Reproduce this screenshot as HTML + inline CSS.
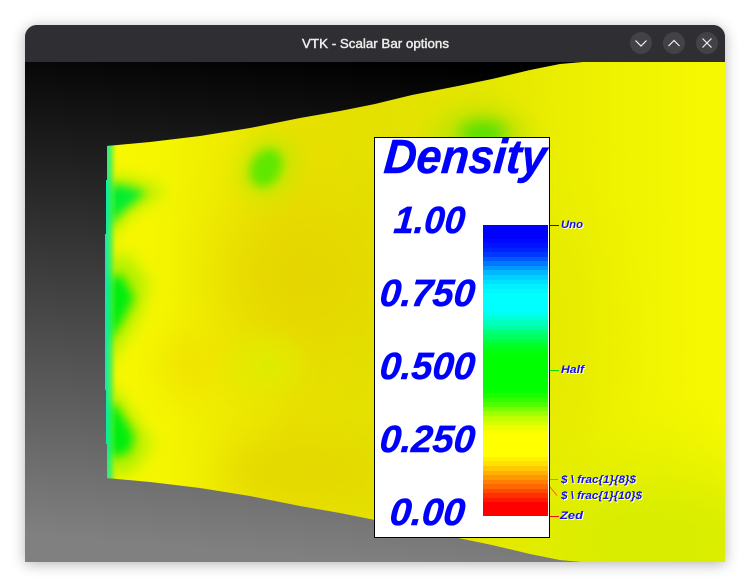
<!DOCTYPE html>
<html><head><meta charset="utf-8"><style>
html,body{margin:0;padding:0;background:#fff;width:750px;height:587px;overflow:hidden}
#win{position:absolute;left:25px;top:25px;width:700px;height:537px;border-radius:12px 12px 0 0;box-shadow:0 2px 14px rgba(0,0,0,.3)}
svg{position:absolute;left:0;top:0}
#bar{position:absolute;left:483px;top:225px;width:65px;height:291px;display:grid;grid-template-rows:repeat(64,1fr)}
#bar i{display:block}
</style></head><body>
<div id="win"></div>
<svg width="750" height="587" viewBox="0 0 750 587" font-family="'Liberation Sans',sans-serif">
<defs>
<clipPath id="w"><path d="M25 562V37a12 12 0 0 1 12-12H713a12 12 0 0 1 12 12V562Z"/></clipPath>
<linearGradient id="bg" gradientUnits="userSpaceOnUse" x1="395" y1="62" x2="355" y2="562"><stop offset="0" stop-color="#000"/><stop offset="1" stop-color="#808080"/></linearGradient>
<linearGradient id="base" gradientUnits="userSpaceOnUse" x1="107" y1="0" x2="725" y2="0">
<stop offset="0" stop-color="#f8f800"/><stop offset=".1" stop-color="#f4f500"/><stop offset=".2" stop-color="#eeea00"/><stop offset=".3" stop-color="#e8e000"/><stop offset=".42" stop-color="#e4e000"/><stop offset=".6" stop-color="#e4e600"/><stop offset=".8" stop-color="#eef200"/><stop offset="1" stop-color="#f6f900"/></linearGradient>
<linearGradient id="strip" gradientUnits="userSpaceOnUse" x1="105" y1="0" x2="117" y2="0"><stop offset="0" stop-color="#00e8c0"/><stop offset=".5" stop-color="#20f070" stop-opacity=".7"/><stop offset="1" stop-color="#80f020" stop-opacity="0"/></linearGradient>
<clipPath id="s"><path d="M107 146L150 142L200 136L250 128L300 118L340 111L375 104L412 95L458 86L492 79L530 70L560 64L583 62H725V562H583L560 560L530 554L492 545L458 538L412 529L375 520L340 513L300 506L250 496L200 488L150 482L107 478V444H106V390H105V234H106V180H107Z"/></clipPath>
<filter id="b4" x="-100%" y="-100%" width="300%" height="300%"><feGaussianBlur stdDeviation="5"/></filter>
<filter id="b6" x="-100%" y="-100%" width="300%" height="300%"><feGaussianBlur stdDeviation="8"/></filter>
<filter id="b10" x="-100%" y="-100%" width="300%" height="300%"><feGaussianBlur stdDeviation="12"/></filter>
<filter id="b20" x="-100%" y="-100%" width="300%" height="300%"><feGaussianBlur stdDeviation="20"/></filter>
<filter id="b40" x="-100%" y="-100%" width="300%" height="300%"><feGaussianBlur stdDeviation="40"/></filter>
<clipPath id="p"><rect x="375" y="138" width="174" height="399"/></clipPath>
</defs>
<g clip-path="url(#w)">
<rect x="25" y="25" width="700" height="537" fill="#2f2f33"/>
<rect x="25" y="62" width="700" height="500" fill="url(#bg)"/>
<g clip-path="url(#s)">
<rect x="100" y="50" width="640" height="520" fill="url(#base)"/>
<ellipse cx="300" cy="275" rx="80" ry="70" fill="#e4d400" filter="url(#b40)"/>
<ellipse cx="300" cy="470" rx="80" ry="30" fill="#e4d800" filter="url(#b20)"/>
<ellipse cx="190" cy="365" rx="28" ry="32" fill="#f0e000" filter="url(#b20)"/>
<ellipse cx="660" cy="540" rx="130" ry="70" fill="#d6ec00" filter="url(#b40)"/>
<ellipse cx="540" cy="340" rx="50" ry="120" fill="#e4ea00" filter="url(#b40)"/>
<ellipse cx="265" cy="366" rx="36" ry="28" fill="#e3ea00" filter="url(#b10)"/>
<ellipse cx="268" cy="365" rx="8" ry="7" fill="#d8ec00" filter="url(#b4)"/>
<ellipse cx="268" cy="167" rx="26" ry="32" transform="rotate(28 268 167)" fill="#c4e800" filter="url(#b10)"/>
<ellipse cx="266" cy="168" rx="15" ry="20" transform="rotate(28 266 168)" fill="#5ee800" filter="url(#b4)"/>
<ellipse cx="480" cy="135" rx="50" ry="28" fill="#c4e400" filter="url(#b10)"/>
<ellipse cx="483" cy="133" rx="24" ry="12" fill="#50e000" filter="url(#b6)"/>
<path d="M107 176L125 176L168 190L130 214L107 244Z" fill="#b0f000" filter="url(#b6)"/>
<path d="M107 184L124 186L146 192L122 212L107 228Z" fill="#00ee30" filter="url(#b4)"/>
<path d="M105 260L125 252L148 280L142 310L124 342L105 372Z" fill="#b0f000" filter="url(#b6)"/>
<path d="M105 278L122 275L134 298L120 325L105 345Z" fill="#00ee10" filter="url(#b4)"/>
<path d="M105 385L115 388L137 420L152 445L132 472L105 478Z" fill="#b0f000" filter="url(#b6)"/>
<path d="M105 405L116 405L134 435L130 452L112 458L105 450Z" fill="#00ee10" filter="url(#b4)"/>
<rect x="105" y="140" width="12" height="345" fill="url(#strip)"/>
</g>
<rect x="25" y="25" width="700" height="37" fill="#2f2f33"/>
<text x="375.5" y="48" text-anchor="middle" font-size="13" fill="#ececec" stroke="#ececec" stroke-width=".45" textLength="147" lengthAdjust="spacingAndGlyphs">VTK - Scalar Bar options</text>
<circle cx="641" cy="43" r="11" fill="#434347"/><circle cx="674" cy="43" r="11" fill="#434347"/><circle cx="707" cy="43" r="11" fill="#434347"/>
<g fill="none" stroke="#f0f0f0" stroke-width="1.2"><path d="M635.500 40.500L641 46L646.500 40.500"/><path d="M668.500 46L674 40.500L679.500 46"/><path d="M702.500 38.500L711.500 47.500M711.500 38.500L702.500 47.500"/></g>
</g>
<rect x="374.500" y="137.500" width="175" height="400" fill="#fff" stroke="#000"/>
<g clip-path="url(#p)" fill="#0000ff" stroke="#0000ff" stroke-width=".5" font-weight="700" font-style="italic">
<text transform="translate(383,173) skewX(-5)" font-size="48" textLength="162" lengthAdjust="spacingAndGlyphs">Density</text>
</g>
<g fill="#0000ff" stroke="#0000ff" stroke-width=".5" font-weight="700" font-style="italic" font-size="38">
<text transform="translate(393,233) skewX(-5)" textLength="71" lengthAdjust="spacingAndGlyphs">1.00</text>
<text transform="translate(379,306) skewX(-5)" textLength="95" lengthAdjust="spacingAndGlyphs">0.750</text>
<text transform="translate(379,379) skewX(-5)" textLength="95" lengthAdjust="spacingAndGlyphs">0.500</text>
<text transform="translate(379,452) skewX(-5)" textLength="95" lengthAdjust="spacingAndGlyphs">0.250</text>
<text transform="translate(389,525) skewX(-5)" textLength="75" lengthAdjust="spacingAndGlyphs">0.00</text>
</g>
<g stroke-width="1" shape-rendering="crispEdges">
<path d="M550 225.500H559" stroke="#1010c0"/>
<path d="M550 370.500H559" stroke="#00e000"/>
<path d="M550 479.500H558" stroke="#f08020"/>
<path d="M550 516.500H559" stroke="#f01010"/>
</g>
<path d="M550 487L557 495.500" stroke="#f05010" stroke-width=".8" fill="none"/>
<g font-weight="700" font-style="italic" font-size="11">
<g fill="#fff" transform="translate(1,1)">
<text x="561" y="228" textLength="22" lengthAdjust="spacingAndGlyphs">Uno</text>
<text x="561" y="373" textLength="23" lengthAdjust="spacingAndGlyphs">Half</text>
<text x="561" y="483" textLength="75" lengthAdjust="spacingAndGlyphs">$ \ frac{1}{8}$</text>
<text x="561" y="499" textLength="81" lengthAdjust="spacingAndGlyphs">$ \ frac{1}{10}$</text>
<text x="560" y="519" textLength="23" lengthAdjust="spacingAndGlyphs">Zed</text>
</g>
<g fill="#1010e8">
<text x="561" y="228" textLength="22" lengthAdjust="spacingAndGlyphs">Uno</text>
<text x="561" y="373" textLength="23" lengthAdjust="spacingAndGlyphs">Half</text>
<text x="561" y="483" textLength="75" lengthAdjust="spacingAndGlyphs">$ \ frac{1}{8}$</text>
<text x="561" y="499" textLength="81" lengthAdjust="spacingAndGlyphs">$ \ frac{1}{10}$</text>
<text x="560" y="519" textLength="23" lengthAdjust="spacingAndGlyphs">Zed</text>
</g>
</g>
</svg>
<div id="bar">
<i style="background:#00f"></i><i style="background:#00f"></i><i style="background:#00f"></i>
<i style="background:#0008ff"></i><i style="background:#0014ff"></i><i style="background:#0022ff"></i><i style="background:#0038ff"></i><i style="background:#0058ff"></i><i style="background:#0078ff"></i><i style="background:#0098ff"></i><i style="background:#00b8ff"></i><i style="background:#00d0ff"></i><i style="background:#00e0ff"></i><i style="background:#00f0ff"></i><i style="background:#00f8ff"></i>
<i style="background:#0ff"></i><i style="background:#0ff"></i><i style="background:#0ff"></i><i style="background:#0ff"></i>
<i style="background:#00fff0"></i><i style="background:#00ffd8"></i><i style="background:#00ffc0"></i><i style="background:#00ffa0"></i><i style="background:#00ff80"></i><i style="background:#00ff60"></i><i style="background:#00ff40"></i><i style="background:#00ff28"></i><i style="background:#00ff14"></i><i style="background:#00ff08"></i>
<i style="background:#0f0"></i><i style="background:#0f0"></i><i style="background:#0f0"></i><i style="background:#0f0"></i><i style="background:#0f0"></i><i style="background:#0f0"></i><i style="background:#0f0"></i>
<i style="background:#08ff00"></i><i style="background:#18ff00"></i><i style="background:#30ff00"></i><i style="background:#50ff00"></i><i style="background:#78ff00"></i><i style="background:#a0ff00"></i><i style="background:#c0ff00"></i><i style="background:#d8ff00"></i><i style="background:#ecff00"></i><i style="background:#f8ff00"></i>
<i style="background:#ff0"></i><i style="background:#ff0"></i><i style="background:#ff0"></i><i style="background:#ff0"></i><i style="background:#ff0"></i>
<i style="background:#fff000"></i><i style="background:#ffe000"></i><i style="background:#ffc800"></i><i style="background:#ffb000"></i><i style="background:#ff9800"></i><i style="background:#ff8000"></i><i style="background:#ff6800"></i><i style="background:#ff4800"></i><i style="background:#ff3000"></i><i style="background:#ff1800"></i>
<i style="background:#f00"></i><i style="background:#f00"></i><i style="background:#f00"></i>
</div>
</body></html>
